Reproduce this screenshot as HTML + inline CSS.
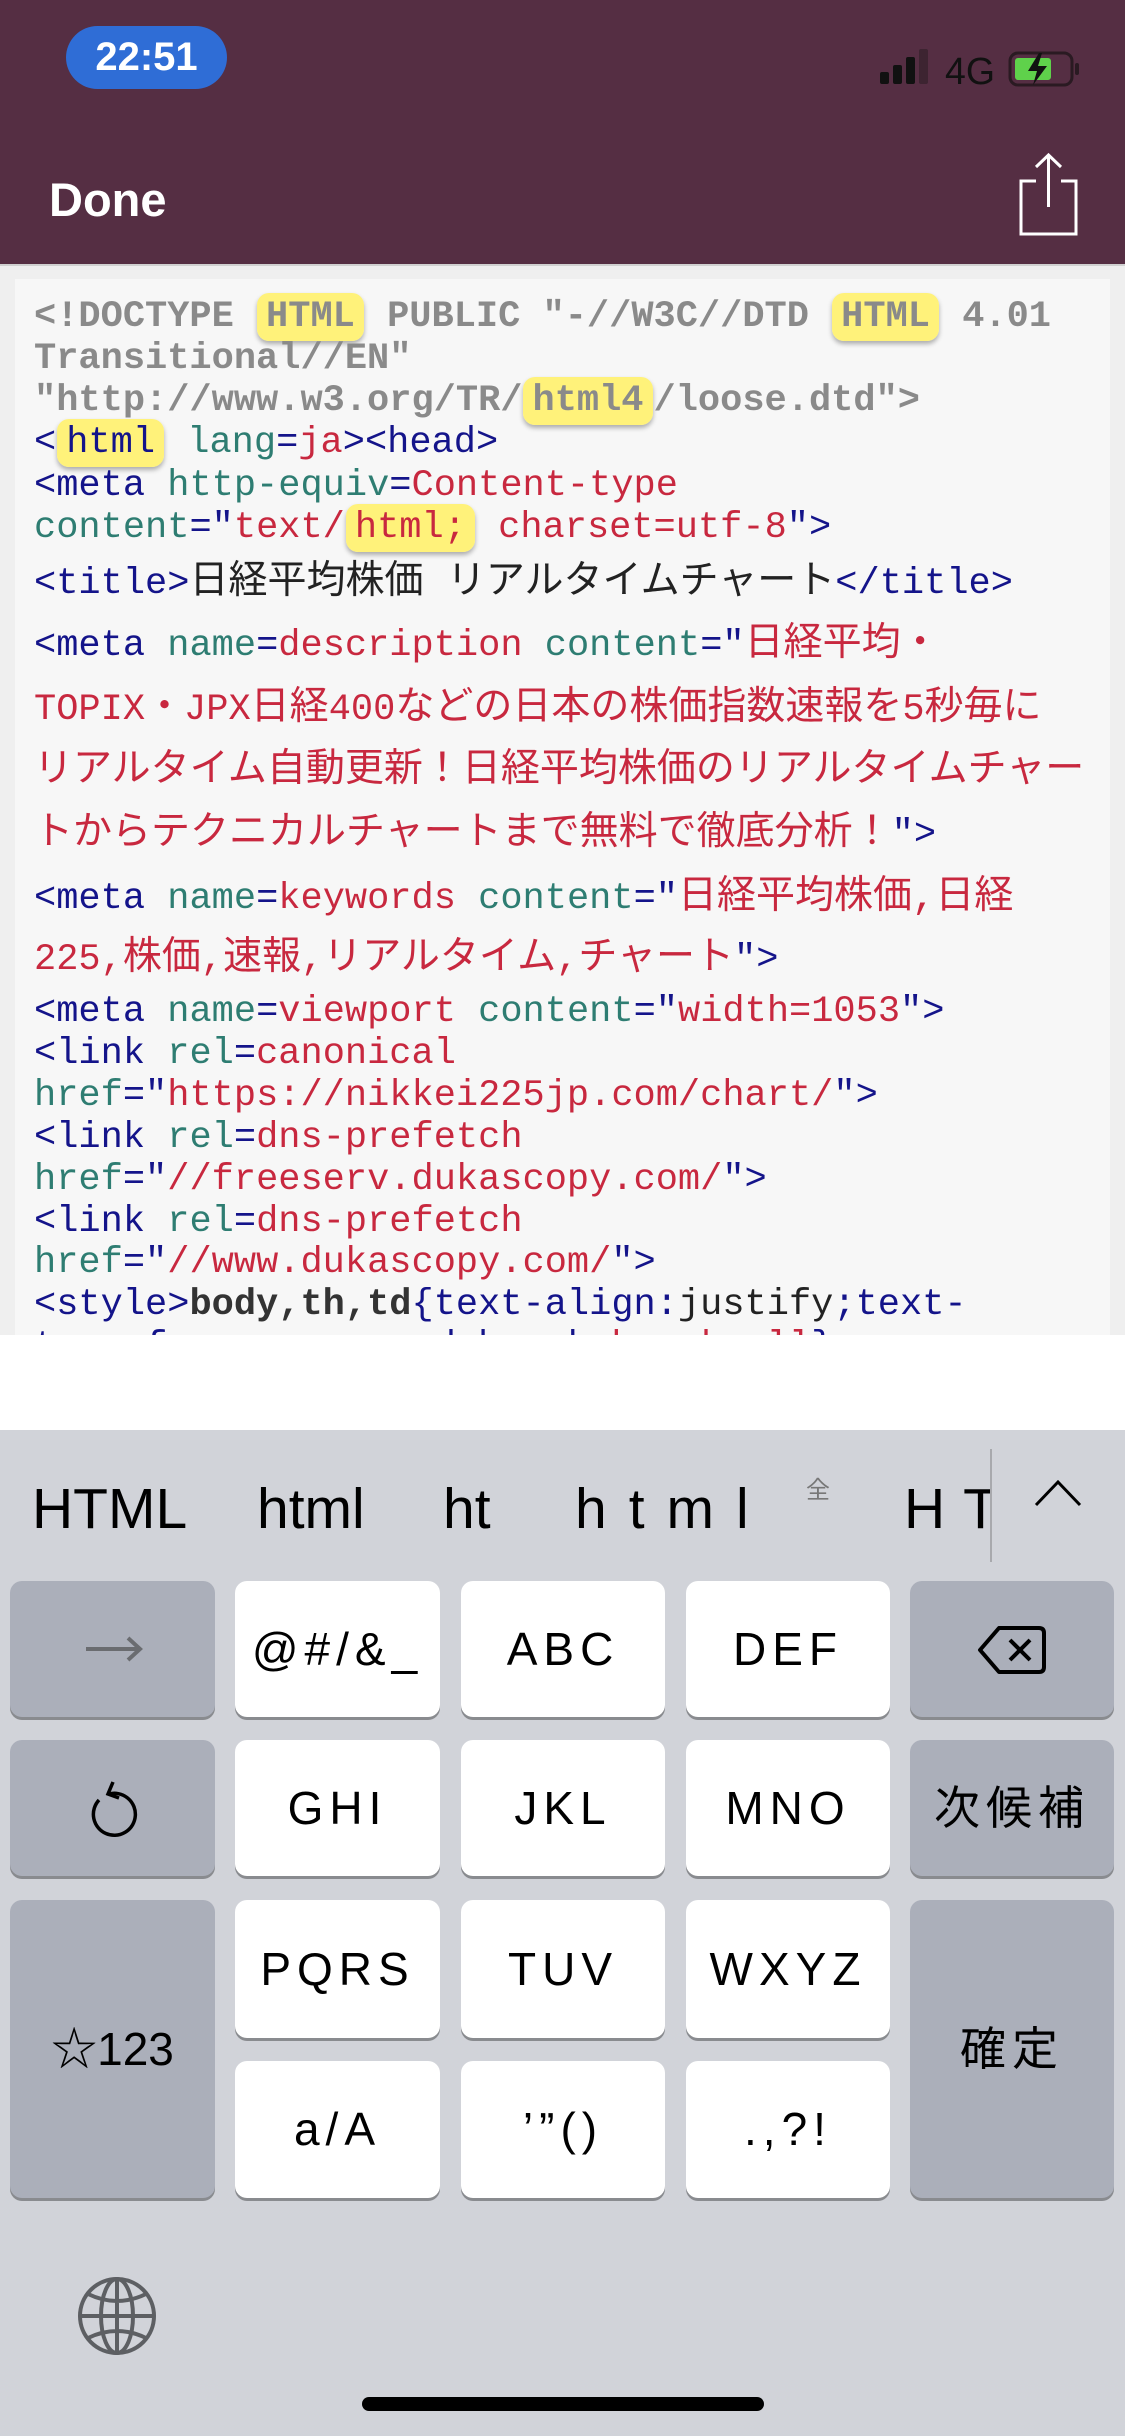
<!DOCTYPE html>
<html><head><meta charset="utf-8">
<style>
*{margin:0;padding:0;box-sizing:border-box}
body{width:1125px;height:2436px;position:relative;overflow:hidden;background:#fff;font-family:"Liberation Sans","Noto Sans CJK JP",sans-serif}
#hdr{position:absolute;left:0;top:0;width:1125px;height:264px;background:#552e43}
#pill{position:absolute;left:66px;top:26px;width:161px;height:63px;border-radius:32px;background:#2f6dd6;color:#fff;font-size:40px;font-weight:bold;text-align:center;line-height:63px}
#done{position:absolute;left:49px;top:170px;color:#fff;font-size:47px;font-weight:bold;line-height:60px}
#wrap{position:absolute;left:0;top:264px;width:1125px;height:1071px;background:#efefef;border-top:2px solid #d0d0d0}
#panel{position:absolute;left:15px;top:279px;width:1095px;height:1056px;background:#f7f7f7;overflow:hidden}
.l{position:absolute;left:19px;height:42px;line-height:42px;font-family:"Liberation Mono","Noto Sans CJK JP",monospace;font-size:37px;white-space:nowrap;color:#14148a}
.h{background:#fff27a;border-radius:12px;box-shadow:0 3px 5px rgba(0,0,0,.3);padding:3px 9px;margin:0 1px}
.j{font-size:39px}
.d{color:#8a8a8a;font-weight:bold}
.a{color:#2e7d72}.v{color:#c8283f}.k{color:#333;font-weight:bold}.t{color:#222}
#kb{position:absolute;left:0;top:1430px;width:1125px;height:1006px;background:#d1d3d9}
.c{position:absolute;top:1476px;font-size:57px;color:#000;line-height:66px}
.key{position:absolute;border-radius:12px;background:#fff;box-shadow:0 3px 0 #898b8f;text-align:center;font-size:46px;color:#000;letter-spacing:6px}
.f{background:#abafba}
</style></head><body>
<div id="hdr">
<div id="pill">22:51</div>
<svg style="position:absolute;left:878px;top:48px" width="210" height="40" viewBox="0 0 210 40">
<rect x="2" y="24" width="9" height="12" rx="2" fill="#111"/>
<rect x="15" y="17" width="9" height="19" rx="2" fill="#111"/>
<rect x="28" y="9" width="9" height="27" rx="2" fill="#111"/>
<rect x="41" y="1" width="9" height="35" rx="2" fill="#3d2431"/>
<text x="67" y="36" font-family="Liberation Sans" font-size="38" fill="#111" textLength="50" lengthAdjust="spacingAndGlyphs">4G</text>
<rect x="132" y="5" width="62" height="32" rx="8" fill="none" stroke="#2a1a22" stroke-width="3"/>
<rect x="137" y="10" width="36" height="22" rx="3" fill="#5fd14b"/>
<rect x="197" y="15" width="4" height="12" rx="2" fill="#2a1a22"/>
<path d="M161 5 L150 23 L159 23 L155 37 L169 18 L160 18 L164 5 Z" fill="#111"/>
</svg>
<div id="done">Done</div>
<svg style="position:absolute;left:1015px;top:150px" width="66" height="88" viewBox="0 0 66 88">
<path d="M21 31 H6 V84 H61 V31 H46" fill="none" stroke="#fff" stroke-width="3"/>
<path d="M33.5 5 V57 M21 17 L33.5 5 L46 17" fill="none" stroke="#fff" stroke-width="3"/>
</svg>
</div>
<div id="wrap"></div>
<div id="panel">
<div class="l d" style="top:17px">&lt;!DOCTYPE <span class="h">HTML</span> PUBLIC "-//W3C//DTD <span class="h">HTML</span> 4.01</div>
<div class="l d" style="top:59px">Transitional//EN"</div>
<div class="l d" style="top:101px">"http://www.w3.org/TR/<span class="h">html4</span>/loose.dtd"&gt;</div>
<div class="l" style="top:143px">&lt;<span class="h">html</span> <span class="a">lang</span>=<span class="v">ja</span>&gt;&lt;head&gt;</div>
<div class="l" style="top:186px">&lt;meta <span class="a">http-equiv</span>=<span class="v">Content-type</span></div>
<div class="l" style="top:228px"><span class="a">content</span>="<span class="v">text/<span class="h">html;</span> charset=utf-8</span>"&gt;</div>
<div class="l" style="top:283px">&lt;title&gt;<span class="t j">日経平均株価 リアルタイムチャート</span>&lt;/title&gt;</div>
<div class="l" style="top:345px">&lt;meta <span class="a">name</span>=<span class="v">description</span> <span class="a">content</span>="<span class="v j">日経平均・</span></div>
<div class="l v" style="top:409px">TOPIX<span class="j">・</span>JPX<span class="j">日経</span>400<span class="j">などの日本の株価指数速報を</span>5<span class="j">秒毎に</span></div>
<div class="l v j" style="top:471px">リアルタイム自動更新！日経平均株価のリアルタイムチャー</div>
<div class="l" style="top:534px"><span class="v j">トからテクニカルチャートまで無料で徹底分析！</span>"&gt;</div>
<div class="l" style="top:598px">&lt;meta <span class="a">name</span>=<span class="v">keywords</span> <span class="a">content</span>="<span class="v j">日経平均株価,日経</span></div>
<div class="l" style="top:659px"><span class="v">225,<span class="j">株価</span>,<span class="j">速報</span>,<span class="j">リアルタイム</span>,<span class="j">チャート</span></span>"&gt;</div>
<div class="l" style="top:712px">&lt;meta <span class="a">name</span>=<span class="v">viewport</span> <span class="a">content</span>="<span class="v">width=1053</span>"&gt;</div>
<div class="l" style="top:754px">&lt;link <span class="a">rel</span>=<span class="v">canonical</span></div>
<div class="l" style="top:796px"><span class="a">href</span>="<span class="v">https://nikkei225jp.com/chart/</span>"&gt;</div>
<div class="l" style="top:838px">&lt;link <span class="a">rel</span>=<span class="v">dns-prefetch</span></div>
<div class="l" style="top:880px"><span class="a">href</span>="<span class="v">//freeserv.dukascopy.com/</span>"&gt;</div>
<div class="l" style="top:922px">&lt;link <span class="a">rel</span>=<span class="v">dns-prefetch</span></div>
<div class="l" style="top:963px"><span class="a">href</span>="<span class="v">//www.dukascopy.com/</span>"&gt;</div>
<div class="l" style="top:1005px">&lt;style&gt;<span class="k">body,th,td</span>{text-align:<span class="t">justify</span>;text-</div>
<div class="l" style="top:1047px">transform:<span class="t">none</span>;word-break:<span class="v">break-all</span>}</div>
</div>
<div id="kb">
<div class="c" style="left:32px;top:46px">HTML</div>
<div class="c" style="left:257px;top:46px">html</div>
<div class="c" style="left:443px;top:46px">ht</div>
<div class="c" style="left:575px;top:46px;letter-spacing:22px">html</div>
<div style="position:absolute;left:806px;top:40px;font-size:24px;color:#777">全</div>
<div class="c" style="left:904px;top:46px;letter-spacing:18px;width:87px;overflow:hidden">HT</div>
<div style="position:absolute;left:990px;top:19px;width:2px;height:113px;background:#a8a9ad"></div>
<svg style="position:absolute;left:1033px;top:48px" width="50" height="30"><path d="M3 27 L25 4 L47 27" fill="none" stroke="#000" stroke-width="3"/></svg>

<div class="key f" style="left:10px;top:151px;width:205px;height:136px">
<svg style="margin-top:50px" width="62" height="36"><path d="M4 18 H58 M46 7 L58 18 L46 29" fill="none" stroke="#6a6c70" stroke-width="4"/></svg></div>
<div class="key" style="left:235px;top:151px;width:205px;height:136px;line-height:136px">@#/&amp;_</div>
<div class="key" style="left:461px;top:151px;width:204px;height:136px;line-height:136px">ABC</div>
<div class="key" style="left:686px;top:151px;width:204px;height:136px;line-height:136px">DEF</div>
<div class="key f" style="left:910px;top:151px;width:204px;height:136px">
<svg style="margin-top:44px" width="70" height="50" viewBox="0 0 70 50"><path d="M22 3 H62 Q67 3 67 8 V42 Q67 47 62 47 H22 L3 25 Z" fill="none" stroke="#000" stroke-width="4" stroke-linejoin="round"/><path d="M33 15 L53 35 M53 15 L33 35" stroke="#000" stroke-width="4"/></svg></div>

<div class="key f" style="left:10px;top:310px;width:205px;height:136px">
<svg style="margin-top:38px" width="60" height="64" viewBox="0 0 60 64"><path d="M30 4 L25 16 L36 20" fill="none" stroke="#000" stroke-width="3.5"/><path d="M26 16 A21 21 0 1 1 16 22" fill="none" stroke="#000" stroke-width="3.5"/></svg></div>
<div class="key" style="left:235px;top:310px;width:205px;height:136px;line-height:136px">GHI</div>
<div class="key" style="left:461px;top:310px;width:204px;height:136px;line-height:136px">JKL</div>
<div class="key" style="left:686px;top:310px;width:204px;height:136px;line-height:136px">MNO</div>
<div class="key f" style="left:910px;top:310px;width:204px;height:136px;line-height:136px">次候補</div>

<div class="key f" style="left:10px;top:470px;width:205px;height:298px;line-height:298px;letter-spacing:0">☆123</div>
<div class="key" style="left:235px;top:470px;width:205px;height:138px;line-height:138px">PQRS</div>
<div class="key" style="left:461px;top:470px;width:204px;height:138px;line-height:138px">TUV</div>
<div class="key" style="left:686px;top:470px;width:204px;height:138px;line-height:138px">WXYZ</div>
<div class="key f" style="left:910px;top:470px;width:204px;height:298px;line-height:298px">確定</div>
<div class="key" style="left:235px;top:631px;width:205px;height:137px;line-height:137px">a/A</div>
<div class="key" style="left:461px;top:631px;width:204px;height:137px;line-height:137px">’”()</div>
<div class="key" style="left:686px;top:631px;width:204px;height:137px;line-height:137px">.,?!</div>

<svg style="position:absolute;left:77px;top:846px" width="80" height="80" viewBox="0 0 80 80">
<g fill="none" stroke="#5d5f63" stroke-width="4"><ellipse cx="40" cy="40" rx="37" ry="37"/><ellipse cx="40" cy="40" rx="16" ry="37"/><path d="M40 3 V77 M3 40 H77 M11 18 Q40 32 69 18 M11 62 Q40 48 69 62"/></g></svg>
<div style="position:absolute;left:362px;top:967px;width:402px;height:14px;border-radius:7px;background:#000"></div>
</div>
</body></html>
